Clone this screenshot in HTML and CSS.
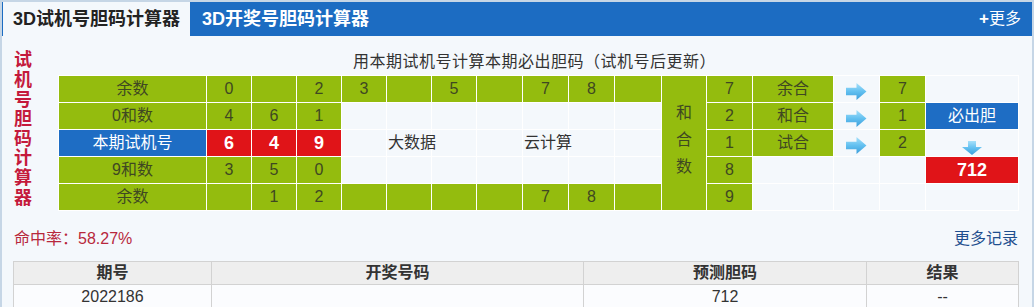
FILE: index.html
```html
<!DOCTYPE html>
<html lang="zh-CN">
<head>
<meta charset="utf-8">
<title>3D试机号胆码计算器</title>
<link rel="stylesheet" href="styles.css">
</head>
<body>
<svg width="0" height="0" class="defs" aria-hidden="true">
  <defs>
    <linearGradient id="ag" x1="0" y1="0" x2="0" y2="1">
      <stop offset="0" stop-color="#a6e0fa"/>
      <stop offset="0.5" stop-color="#62c0f0"/>
      <stop offset="1" stop-color="#3c9edb"/>
    </linearGradient>
  </defs>
</svg>
<div class="box">
  <div class="hd">
    <div class="tab on">3D试机号胆码计算器</div>
    <div class="tab">3D开奖号胆码计算器</div>
    <a class="more" href="#"><b>+</b>更多</a>
  </div>
  <div class="bd">
    <div class="calc">
      <div class="side">试机号胆码计算器</div>
      <table class="grid">
        <colgroup>
          <col class="w148"><col class="w45"><col class="w45"><col class="w45"><col class="w45"><col class="w45"><col class="w45"><col class="w46"><col class="w46"><col class="w46"><col class="w47"><col class="w45"><col class="w46"><col class="w81"><col class="w46"><col class="w46"><col class="w93">
        </colgroup>
        <tr class="title"><td colspan="17">用本期试机号计算本期必出胆码（试机号后更新）</td></tr>
        <tr>
          <td class="g">余数</td><td class="g">0</td><td class="g"></td><td class="g">2</td><td class="g">3</td><td class="g"></td><td class="g">5</td><td class="g"></td><td class="g">7</td><td class="g">8</td><td class="g"></td>
          <td class="g vert" rowspan="5"><span>和合数</span></td>
          <td class="g">7</td><td class="g">余合</td>
          <td class="arr"><svg width="21" height="17" viewBox="0 0 20 16"><polygon points="0,4.5 10,4.5 10,0 19.5,8 10,16 10,11.5 0,11.5" fill="url(#ag)"/></svg></td>
          <td class="g">7</td><td></td>
        </tr>
        <tr>
          <td class="g">0和数</td><td class="g">4</td><td class="g">6</td><td class="g">1</td><td></td><td></td><td></td><td></td><td></td><td></td><td></td>
          <td class="g">2</td><td class="g">和合</td>
          <td class="arr"><svg width="21" height="17" viewBox="0 0 20 16"><polygon points="0,4.5 10,4.5 10,0 19.5,8 10,16 10,11.5 0,11.5" fill="url(#ag)"/></svg></td>
          <td class="g">1</td><td class="b">必出胆</td>
        </tr>
        <tr>
          <td class="b">本期试机号</td><td class="r">6</td><td class="r">4</td><td class="r">9</td><td></td><td class="word">大数据</td><td></td><td></td><td class="word">云计算</td><td></td><td></td>
          <td class="g">1</td><td class="g">试合</td>
          <td class="arr"><svg width="21" height="17" viewBox="0 0 20 16"><polygon points="0,4.5 10,4.5 10,0 19.5,8 10,16 10,11.5 0,11.5" fill="url(#ag)"/></svg></td>
          <td class="g">2</td>
          <td class="darr"><svg width="20" height="14" viewBox="0 0 20 14"><polygon points="6,0 14,0 14,6 20,6 10,14 0,6 6,6" fill="url(#ag)"/></svg></td>
        </tr>
        <tr>
          <td class="g">9和数</td><td class="g">3</td><td class="g">5</td><td class="g">0</td><td></td><td></td><td></td><td></td><td></td><td></td><td></td>
          <td class="g">8</td><td></td><td></td><td></td><td class="r">712</td>
        </tr>
        <tr>
          <td class="g">余数</td><td class="g"></td><td class="g">1</td><td class="g">2</td><td class="g"></td><td class="g"></td><td class="g"></td><td class="g"></td><td class="g">7</td><td class="g">8</td><td class="g"></td>
          <td class="g">9</td><td></td><td></td><td></td><td></td>
        </tr>
      </table>
    </div>
    <div class="stats">
      <span class="rate">命中率：58.27%</span>
      <a class="rec" href="#">更多记录</a>
    </div>
    <table class="hist">
      <colgroup><col class="h1"><col class="h2"><col class="h3"><col class="h4"></colgroup>
      <tr><th>期号</th><th>开奖号码</th><th>预测胆码</th><th>结果</th></tr>
      <tr><td>2022186</td><td></td><td>712</td><td>--</td></tr>
    </table>
  </div>
</div>
</body>
</html>
```
FILE: styles.css
```css
* { box-sizing: border-box; }
body {
  margin: 0;
  font-family: "Liberation Sans", "Noto Sans CJK SC", sans-serif;
  color: #333;
  background: #fff;
}
.defs { position: absolute; }
.box {
  width: 1034px;
  border: 2px solid #c6d6e6;
  background: #f4f8fc;
}
.hd {
  display: flex;
  height: 34px;
  background: #1c6cc2;
  padding-left: 1px;
}
.tab {
  padding: 0 10px;
  font-size: 18px;
  font-weight: bold;
  line-height: 34px;
  color: #fff;
  white-space: nowrap;
}
.tab.on { background: #f4f8fc; color: #222; }
.tab + .tab { padding-left: 12px; }
.more {
  margin-left: auto;
  padding-right: 11px;
  font-size: 16px;
  line-height: 34px;
  color: #fff;
  text-decoration: none;
}
.more b { font-size: 17px; }
.bd { padding: 13px 14px 0 0; }
.calc { display: flex; align-items: center; }
.side {
  width: 56px;
  padding: 0 26px 0 12px;
  font-size: 18px;
  line-height: 19.6px;
  font-weight: bold;
  color: #c41a3c;
  flex: none;
}
.grid {
  width: 960px;
  table-layout: fixed;
  border-collapse: collapse;
  font-size: 16px;
  text-align: center;
  flex: none;
}
.w148 { width: 148px; } .w45 { width: 45px; } .w46 { width: 46px; } .w47 { width: 47px; } .w81 { width: 81px; } .w93 { width: 93px; }
.grid td {
  border: 1px solid #fff;
  padding: 0;
  height: 27px;
  line-height: 20px;
  color: #333;
  white-space: nowrap;
}
.grid .title td {
  height: 26px;
  border-top: none;
  border-left: none;
  border-right: none;
  padding-right: 8px;
  letter-spacing: 0.5px;
  color: #333;
}
.grid td.g { background: #94bc0e; color: #3f4822; }
.grid td.b { background: #1e6dc4; color: #fff; }
.grid td.r { background: #e01418; color: #fff; font-weight: bold; font-size: 18px; }
.grid td.word { text-align: left; overflow: visible; padding-left: 1px; }
.grid td.vert span {
  display: block;
  width: 16px;
  margin: 0 auto;
  white-space: normal;
  line-height: 27px;
  position: relative;
  top: -3px;
}
.grid td.arr { padding-top: 5px; }
.grid td.arr svg, .grid td.darr svg { display: block; margin: 0 auto; }
.grid td.darr { vertical-align: bottom; padding-bottom: 1px; }
.stats {
  display: flex;
  justify-content: space-between;
  align-items: center;
  margin: 16px 0 0 12px;
  height: 20px;
}
.rate { font-size: 16px; color: #b8283c; }
.rec { font-size: 16px; color: #1f4f8f; text-decoration: none; }
.hist {
  margin: 14px 0 0 11px;
  width: 1005px;
  table-layout: fixed;
  border-collapse: collapse;
  font-size: 16px;
  text-align: center;
}
.h1 { width: 198px; } .h2 { width: 372px; } .h3 { width: 283px; } .h4 { width: 152px; }
.hist th {
  background: #eeeeee;
  border: 1px solid #d2d2d2;
  height: 23px;
  padding: 0;
  line-height: 20px;
  font-weight: bold;
  color: #333;
}
.hist td {
  background: #fbfcfe;
  border: 1px solid #d2d2d2;
  height: 26px;
  padding: 0;
  line-height: 20px;
  color: #333;
}
```
